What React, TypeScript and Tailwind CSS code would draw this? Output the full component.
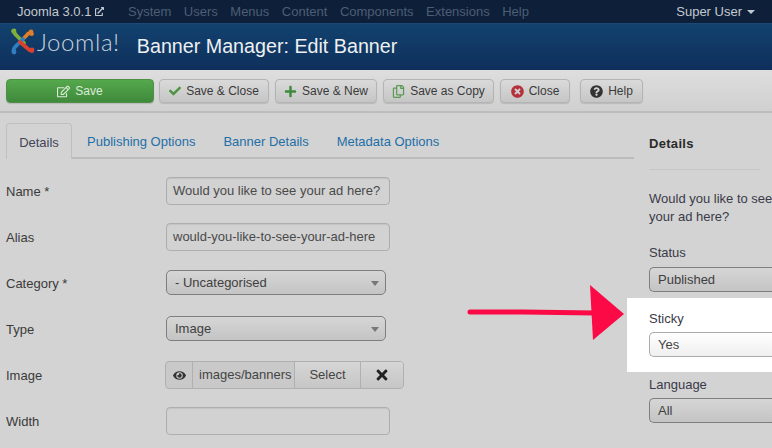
import { FaCheck, FaPlus, FaTimes, FaEye, FaQuestionCircle, FaTimesCircle, FaRegEdit, FaRegCopy, FaExternalLinkAlt } from "react-icons/fa";
import type { ReactNode } from "react";

const font = { fontFamily: '"Liberation Sans", Arial, sans-serif' };

function Logo() {
  return (
    <div className="flex items-center">
      <svg width="26" height="27" viewBox="0 0 26 27" className="ml-[10px] shrink-0">
        <g fill="none" strokeWidth="3.8" strokeLinecap="round" strokeLinejoin="round">
          <path d="M3 3 L6 7 L11 12 L14 15" stroke="#7fae3a" />
          <path d="M12 12 L17 7 C18 5 20 5 22 6" stroke="#e07f2a" />
          <path d="M4 24 C2 21 5 19 7 17 L13 11" stroke="#2f7fc0" />
          <path d="M10 14 L17 20 C19 22 20 23 22 23" stroke="#d8402f" />
        </g>
        <circle cx="4" cy="3" r="2.4" fill="#7fae3a" />
        <circle cx="21" cy="4" r="2.4" fill="#e07f2a" />
        <circle cx="4" cy="24" r="2.4" fill="#2f7fc0" />
        <circle cx="22" cy="22" r="2.4" fill="#d8402f" />
      </svg>
      <span className="ml-[1px] text-[24px] leading-none font-light tracking-[0.6px] text-[#c9d2da]" style={{ fontFamily: 'Lato, sans-serif' }}>Joomla!</span>
    </div>
  );
}

function ToolBtn({ icon, label, className = "", tone = "bg-gradient-to-b from-[#dadada] to-[#c6c6c6] border-[#b4b4b4] text-[#3a3a3a]" }: { icon: ReactNode; label: string; className?: string; tone?: string }) {
  return (
    <div className={`flex h-[24px] items-center justify-center gap-[5px] rounded-[4px] border text-[12px] shadow-[0_1px_1px_rgba(0,0,0,0.12)] ${tone} ${className}`}>
      {icon}
      <span>{label}</span>
    </div>
  );
}

function Row({ label, children }: { label: string; children: ReactNode }) {
  return (
    <div className="flex h-[46px] items-center">
      <div className="w-[160px] text-[13px] text-[#3a3a3a]">{label}</div>
      {children}
    </div>
  );
}

function TextBox({ value = "" }: { value?: string }) {
  return (
    <div className="mb-[2px] flex h-[28px] w-[224px] items-center rounded-[4px] border border-[#aeaeae] bg-[#d2d2d2] px-[6px] text-[13px] whitespace-nowrap text-[#4a4a4a] shadow-[inset_0_1px_1px_rgba(0,0,0,0.07)]">
      {value}
    </div>
  );
}

function Select({ value }: { value: string }) {
  return (
    <div className="mb-[4px] flex h-[25px] w-[220px] items-center justify-between rounded-[5px] border border-[#7e7e7e] bg-gradient-to-b from-[#d6d6d6] to-[#c4c4c4] pt-[2px] pr-[6px] pl-[8px] text-[13px] text-[#3f3f3f]">
      <span>{value}</span>
      <span className="h-0 w-0 border-x-[4px] border-t-[5px] border-x-transparent border-t-[#777]" />
    </div>
  );
}

function SideSelect({ value, white = false }: { value: string; white?: boolean }) {
  return (
    <div className={`flex h-[25px] w-[140px] items-center rounded-l-[5px] border-y border-l pl-[8px] text-[13px] ${white ? "border-[#ababab] bg-gradient-to-b from-white to-[#efefef] text-[#444]" : "border-[#7e7e7e] bg-gradient-to-b from-[#d6d6d6] to-[#c4c4c4] text-[#3f3f3f]"}`}>
      {value}
    </div>
  );
}

export default function App() {
  return (
    <div className="relative h-[448px] w-[772px] overflow-hidden bg-[#d3d3d3]" style={font}>
      {/* top menu */}
      <div className="flex h-[23px] items-center justify-between bg-[#0e2039] pr-[17px] pl-[17px] text-[13px]">
        <div className="flex items-center">
          <span className="flex w-[111px] items-center gap-[4px] text-[#c3c9d0]">Joomla 3.0.1 <FaExternalLinkAlt className="text-[9px]" /></span>
          <div className="flex gap-[12.5px] text-[#4d5d75]">
            <span>System</span><span>Users</span><span>Menus</span><span>Content</span><span>Components</span><span>Extensions</span><span>Help</span>
          </div>
        </div>
        <div className="flex items-center gap-[5px] text-[#c3c9d0]">
          <span>Super User</span>
          <span className="h-0 w-0 border-x-[4px] border-t-[4px] border-x-transparent border-t-[#c3c9d0]" />
        </div>
      </div>
      {/* title bar */}
      <div className="flex h-[47px] items-center gap-[17px] border-t border-[#1c4a78] bg-gradient-to-b from-[#12426f] to-[#0f2f5b]">
        <div className="-mt-[11px]"><Logo /></div>
        <h1 className="text-[19.7px] leading-none font-normal text-[#eef0f2]">Banner Manager: Edit Banner</h1>
      </div>
      {/* toolbar */}
      <div className="flex h-[43px] items-start border-b-2 border-[#bdbdbd] bg-gradient-to-b from-[#dedede] to-[#d0d0d0] pt-[9px] pl-[6px]">
        <ToolBtn className="w-[148px]" tone="bg-gradient-to-b from-[#55a84c] to-[#3f8a3c] border-[#4f8f45] text-[#dcebd8]" icon={<FaRegEdit className="text-[13px]" />} label="Save" />
        <ToolBtn className="ml-[5px] w-[110px]" icon={<FaCheck className="text-[12px] text-[#4c9440]" />} label="Save & Close" />
        <ToolBtn className="ml-[6px] w-[102px]" icon={<FaPlus className="text-[13px] text-[#3f8a3c]" />} label="Save & New" />
        <ToolBtn className="ml-[6px] w-[111px]" icon={<FaRegCopy className="text-[13px] text-[#5b9a52]" />} label="Save as Copy" />
        <ToolBtn className="ml-[6px] w-[70px]" icon={<FaTimesCircle className="text-[13px] text-[#b5303a]" />} label="Close" />
        <ToolBtn className="ml-[10px] w-[63px]" icon={<FaQuestionCircle className="text-[13px] text-[#333]" />} label="Help" />
      </div>
      {/* content */}
      <div className="flex">
        <div className="ml-[6px] w-[621px] shrink-0">
          <div className="mt-[10px] flex h-[36px] w-[628px] border-b-2 border-[#bcbcbc] text-[13px]">
            <div className="-mb-[2px] flex w-[66px] items-center justify-center rounded-t-[4px] border-x border-t border-[#bfbfbf] bg-[#d3d3d3] pt-[2px] text-[#45455a]">Details</div>
            <div className="ml-[15px] flex items-center pt-[3px] text-[#1e6fa8]">Publishing Options</div>
            <div className="ml-[28px] flex items-center pt-[3px] text-[#1e6fa8]">Banner Details</div>
            <div className="ml-[28px] flex items-center pt-[3px] text-[#1e6fa8]">Metadata Options</div>
          </div>
          <div className="mt-[10px]">
            <Row label="Name *"><TextBox value="Would you like to see your ad here?" /></Row>
            <Row label="Alias"><TextBox value="would-you-like-to-see-your-ad-here" /></Row>
            <Row label="Category *"><Select value="- Uncategorised" /></Row>
            <Row label="Type"><Select value="Image" /></Row>
            <Row label="Image">
              <div className="mb-[2px] -ml-[1px] flex h-[28px] w-[239px] overflow-hidden rounded-[4px] border border-[#b0b0b0] bg-[#c9c9c9] text-[13px] text-[#444]">
                <div className="flex w-[27px] items-center justify-center border-r border-[#b0b0b0]"><FaEye className="text-[13px] text-[#333]" /></div>
                <div className="flex w-[102px] items-center overflow-hidden border-r border-[#b0b0b0] pl-[6px] whitespace-nowrap">images/banners</div>
                <div className="flex w-[66px] items-center justify-center border-r border-[#b0b0b0] bg-gradient-to-b from-[#d6d6d6] to-[#c6c6c6]">Select</div>
                <div className="flex flex-1 items-center justify-center bg-gradient-to-b from-[#d6d6d6] to-[#c6c6c6]"><FaTimes className="text-[16px] text-[#222]" /></div>
              </div>
            </Row>
            <Row label="Width"><TextBox /></Row>
          </div>
        </div>
        <div className="min-w-0 flex-1 text-[13px] text-[#3a3a48]">
          <div className="pl-[22px]">
            <div className="mt-[23px] text-[13px] leading-[16px] font-bold tracking-[0.3px] text-[#2a2a2a]">Details</div>
            <div className="mt-[17px] w-[111px] border-t border-[#c6c6c6]" />
            <div className="mt-[20px] leading-[18px] whitespace-pre">{"Would you like to see\nyour ad here?"}</div>
            <div className="mt-[19px] h-[16px] leading-[16px]">Status</div>
            <div className="mt-[6px]"><SideSelect value="Published" /></div>
          </div>
          <div className="mt-[6px] h-[74px] bg-white pt-[13px] pl-[22px]">
            <div className="h-[16px] leading-[16px]">Sticky</div>
            <div className="mt-[5px]"><SideSelect white value="Yes" /></div>
          </div>
          <div className="pl-[22px]">
            <div className="mt-[5px] h-[16px] leading-[16px]">Language</div>
            <div className="mt-[5px]"><SideSelect value="All" /></div>
          </div>
        </div>
      </div>
      {/* annotation arrow */}
      <svg className="absolute top-[280px] left-[465px]" width="165" height="65" viewBox="0 0 165 65">
        <path d="M5 32 L58 32 L130 33" stroke="#fb0a45" strokeWidth="5" strokeLinecap="round" fill="none" />
        <path d="M125 5 L159 34 L128 60 Z" fill="#fb0a45" />
      </svg>
    </div>
  );
}
